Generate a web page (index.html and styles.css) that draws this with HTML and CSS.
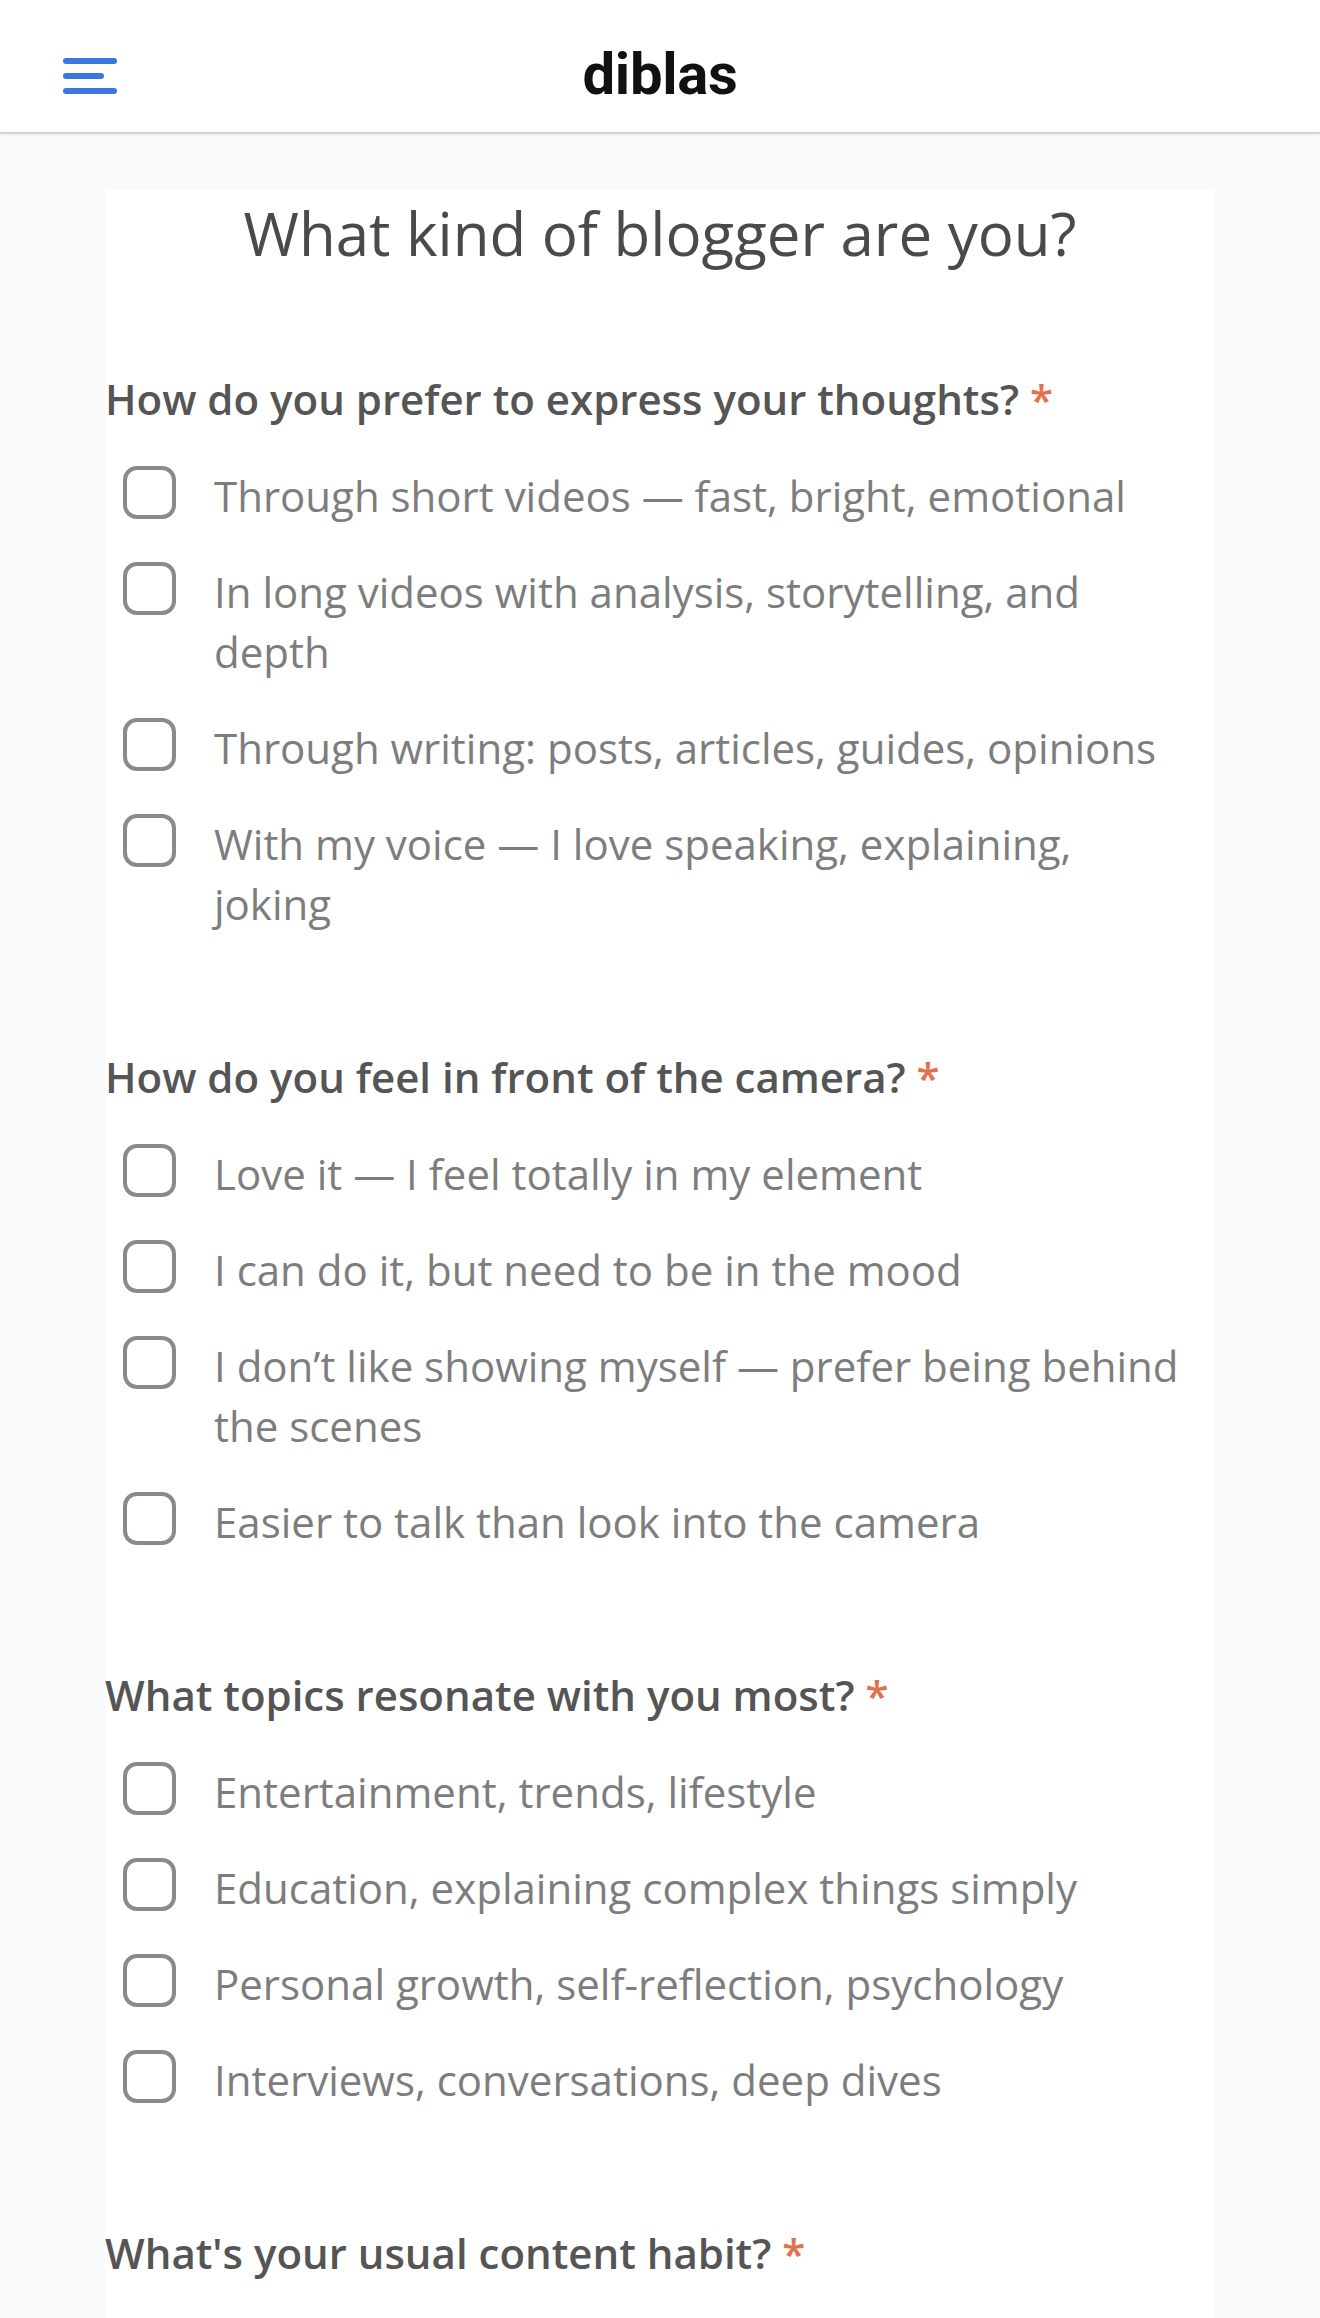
FILE: index.html
```html
<!DOCTYPE html>
<html lang="en">
<head>
    <meta charset="UTF-8">
    <meta name="viewport" content="width=device-width, initial-scale=1.0">
    <title>diblas - What kind of blogger are you?</title>
    <link rel="stylesheet" href="styles.css">
</head>
<body>
    <header class="top-bar">
        <button class="menu-btn" type="button" aria-label="Menu">
            <svg width="54" height="36" viewBox="0 0 54 36">
                <line x1="3" y1="3" x2="51" y2="3" />
                <line x1="3" y1="18" x2="38" y2="18" />
                <line x1="3" y1="33" x2="51" y2="33" />
            </svg>
        </button>
        <div class="brand">diblas</div>
        <div></div>
    </header>

    <main class="quiz-card">
        <h1>What kind of blogger are you?</h1>

        <form id="quizForm">
            <fieldset class="question">
                <legend>How do you prefer to express your thoughts? <span class="req">*</span></legend>
                <label class="option"><input type="checkbox" name="q1"><span>Through short videos — fast, bright, emotional</span></label>
                <label class="option"><input type="checkbox" name="q1"><span>In long videos with analysis, storytelling, and depth</span></label>
                <label class="option"><input type="checkbox" name="q1"><span>Through writing: posts, articles, guides, opinions</span></label>
                <label class="option"><input type="checkbox" name="q1"><span>With my voice — I love speaking, explaining, joking</span></label>
            </fieldset>

            <fieldset class="question">
                <legend>How do you feel in front of the camera? <span class="req">*</span></legend>
                <label class="option"><input type="checkbox" name="q2"><span>Love it — I feel totally in my element</span></label>
                <label class="option"><input type="checkbox" name="q2"><span>I can do it, but need to be in the mood</span></label>
                <label class="option"><input type="checkbox" name="q2"><span>I don’t like showing myself — prefer being behind the scenes</span></label>
                <label class="option"><input type="checkbox" name="q2"><span>Easier to talk than look into the camera</span></label>
            </fieldset>

            <fieldset class="question">
                <legend>What topics resonate with you most? <span class="req">*</span></legend>
                <label class="option"><input type="checkbox" name="q3"><span>Entertainment, trends, lifestyle</span></label>
                <label class="option"><input type="checkbox" name="q3"><span>Education, explaining complex things simply</span></label>
                <label class="option"><input type="checkbox" name="q3"><span>Personal growth, self-reflection, psychology</span></label>
                <label class="option"><input type="checkbox" name="q3"><span>Interviews, conversations, deep dives</span></label>
            </fieldset>

            <fieldset class="question">
                <legend>What's your usual content habit? <span class="req">*</span></legend>
            </fieldset>
        </form>
    </main>
</body>
</html>
```

FILE: styles.css
```css
/* page */
body {
    margin: 0;
    background-color: #f8f9fa;
    font-family: "Open Sans", "Noto Sans", sans-serif;
}

/* top bar */
.top-bar {
    display: grid;
    grid-template-columns: 1fr auto 1fr;
    align-items: center;
    height: 132px;
    background-color: #fff;
    border-bottom: 2px solid #d4d4d4;
    box-shadow: 0 1px 3px rgba(0, 0, 0, 0.06);
}

.menu-btn {
    justify-self: start;
    margin-left: 63px;
    margin-top: 20px;
    padding: 0;
    border: none;
    background: none;
    cursor: pointer;
    line-height: 0;
}

.menu-btn line {
    stroke: #3a78e0;
    stroke-width: 6;
    stroke-linecap: round;
}

.brand {
    font-family: Roboto, "Liberation Sans", sans-serif;
    font-weight: 700;
    font-size: 58px;
    color: #111;
    letter-spacing: -0.3px;
    margin-top: 16px;
}

/* card */
.quiz-card {
    width: 1110px;
    margin: 55px auto 0;
    padding: 8px 0 40px;
    box-sizing: border-box;
    background-color: #fff;
    border-radius: 4px;
}

h1 {
    margin: 0 0 102px;
    font-size: 60px;
    line-height: 72px;
    font-weight: 400;
    color: #4a4a4a;
    text-align: center;
}

#quizForm {
    padding-right: 30px;
}

.question {
    margin: 0 0 115px;
    padding: 0;
    border: none;
    display: flex;
    flex-direction: column;
    gap: 36px;
}

.question legend {
    padding: 0;
    margin-bottom: 39px;
    font-size: 42px;
    line-height: 56px;
    font-weight: 600;
    color: #555;
}

.req {
    color: #e2714f;
}

.option {
    display: flex;
    align-items: flex-start;
    font-size: 42px;
    line-height: 60px;
    color: #7d7d7d;
    cursor: pointer;
}

.option input {
    appearance: none;
    flex: none;
    width: 53px;
    height: 53px;
    margin: 0 38px 0 18px;
    border: 4px solid #8a8a8a;
    border-radius: 14px;
    background: #fff;
}
```
